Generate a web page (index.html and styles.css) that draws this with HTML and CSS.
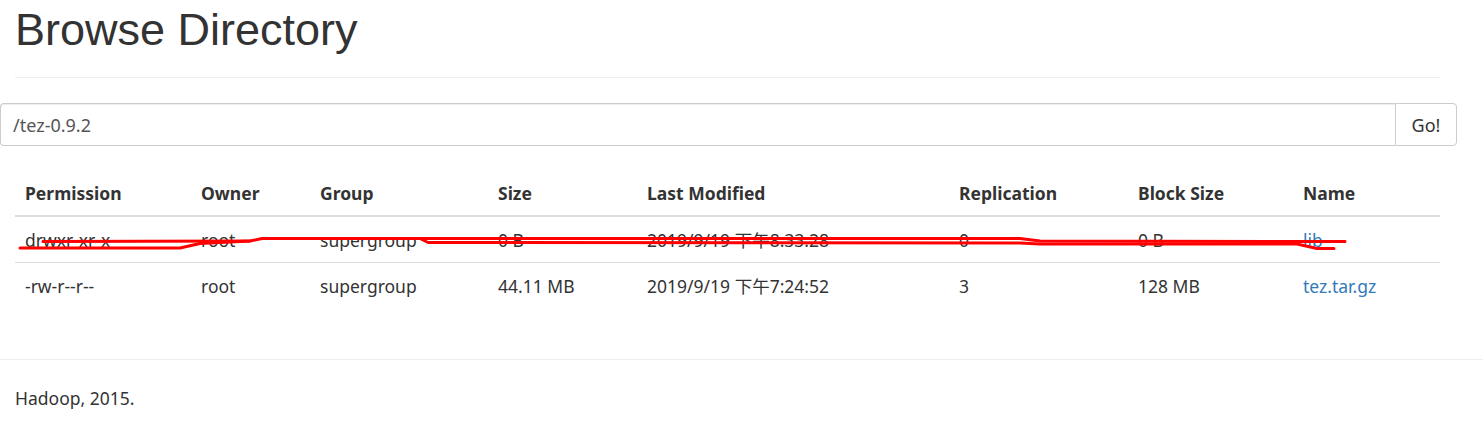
FILE: index.html
```html
<!DOCTYPE html>
<html>
<head>
<meta charset="utf-8">
<title>Browse Directory</title>
<link rel="stylesheet" href="styles.css">
</head>
<body>
<div class="container">
  <div class="page-header">
    <h1 class="title">Browse Directory</h1>
  </div>
  <div class="input-group">
    <input class="path-input" type="text" value="/tez-0.9.2">
    <button class="go-btn" type="button">Go!</button>
  </div>
  <div class="table-wrap">
    <table class="listing">
      <thead>
        <tr>
          <th class="c-perm">Permission</th>
          <th class="c-owner">Owner</th>
          <th class="c-group">Group</th>
          <th class="c-size">Size</th>
          <th class="c-mod">Last Modified</th>
          <th class="c-rep">Replication</th>
          <th class="c-block">Block Size</th>
          <th class="c-name">Name</th>
        </tr>
      </thead>
      <tbody>
        <tr>
          <td>drwxr-xr-x</td>
          <td>root</td>
          <td>supergroup</td>
          <td>0 B</td>
          <td>2019/9/19 下午8:33:28</td>
          <td>0</td>
          <td>0 B</td>
          <td><a class="link" href="#">lib</a></td>
        </tr>
        <tr>
          <td>-rw-r--r--</td>
          <td>root</td>
          <td>supergroup</td>
          <td>44.11 MB</td>
          <td>2019/9/19 下午7:24:52</td>
          <td>3</td>
          <td>128 MB</td>
          <td><a class="link" href="#">tez.tar.gz</a></td>
        </tr>
      </tbody>
    </table>
    <svg class="scribble" width="1483" height="30" viewBox="0 219 1483 30" xmlns="http://www.w3.org/2000/svg">
      <path d="M20 246 L180 246 L200 241.5 L250 239 L262 236.5 L420 236.5 L428 240.5 L1020 241 L1040 242 L1297 242 L1317 246.5 L1334 246.5" fill="none" stroke="#ff0000" stroke-width="3" stroke-linecap="round" stroke-linejoin="round"/>
      <path d="M43 239.5 L250 239 M262 236.5 L1020 236.5 L1040 239 L1345 239.5" fill="none" stroke="#ff0000" stroke-width="3" stroke-linecap="round" stroke-linejoin="round"/>
    </svg>
  </div>
</div>
<footer class="footer">
  <p class="footer-text">Hadoop, 2015.</p>
</footer>
</body>
</html>
```
FILE: styles.css
```css
html, body {
  margin: 0;
  padding: 0;
  background: #fff;
}
body {
  font-family: "Noto Sans", "Noto Sans CJK SC", sans-serif;
  font-size: 17.5px;
  color: #333;
}
.container {
  padding: 0 43px 0 15px;
}
.page-header {
  padding-top: 5px;
  padding-bottom: 22px;
  border-bottom: 1px solid #eee;
}
.title {
  margin: 0;
  font-family: "Liberation Sans", Arial, sans-serif;
  font-weight: 400;
  font-size: 45px;
  line-height: 50px;
  color: #333;
}
.input-group {
  display: flex;
  margin: 25px -17px 0 -15px;
  height: 43px;
}
.path-input {
  flex: 1;
  box-sizing: border-box;
  height: 43px;
  margin: 0;
  padding: 0 12px;
  border: 1px solid #ccc;
  border-right: 0;
  border-radius: 4px 0 0 4px;
  box-shadow: inset 0 1px 1px rgba(0,0,0,.075);
  font-family: "Noto Sans", "Noto Sans CJK SC", sans-serif;
  font-size: 18px;
  color: #555;
  outline: none;
}
.go-btn {
  box-sizing: border-box;
  width: 62px;
  height: 43px;
  margin: 0;
  padding: 0;
  border: 1px solid #ccc;
  border-radius: 0 4px 4px 0;
  background: #fff;
  font-family: "Noto Sans", "Noto Sans CJK SC", sans-serif;
  font-size: 18px;
  color: #333;
}
.table-wrap {
  position: relative;
  margin-top: 26px;
  margin-bottom: 51px;
}
.listing {
  width: 100%;
  border-collapse: collapse;
  table-layout: fixed;
}
.listing th,
.listing td {
  text-align: left;
  padding: 11px 10px 10px;
  line-height: 24px;
  white-space: nowrap;
}
.listing th {
  font-weight: 700;
  border-bottom: 2px solid #ddd;
  padding-top: 9px;
  padding-bottom: 10px;
}
.listing td {
  border-top: 1px solid #ddd;
}
.listing tbody tr:first-child td {
  border-top: 0;
}
.c-perm { width: 156px; }
.c-owner { width: 99px; }
.c-group { width: 158px; }
.c-size { width: 129px; }
.c-mod { width: 292px; }
.c-rep { width: 159px; }
.c-block { width: 145px; }
.link {
  color: #337ab7;
  text-decoration: none;
}
.scribble {
  position: absolute;
  left: -15px;
  top: 49px;
  pointer-events: none;
}
.footer {
  border-top: 1px solid #eee;
}
.footer-text {
  margin: 0;
  padding: 26px 15px;
  line-height: 24px;
}
```
